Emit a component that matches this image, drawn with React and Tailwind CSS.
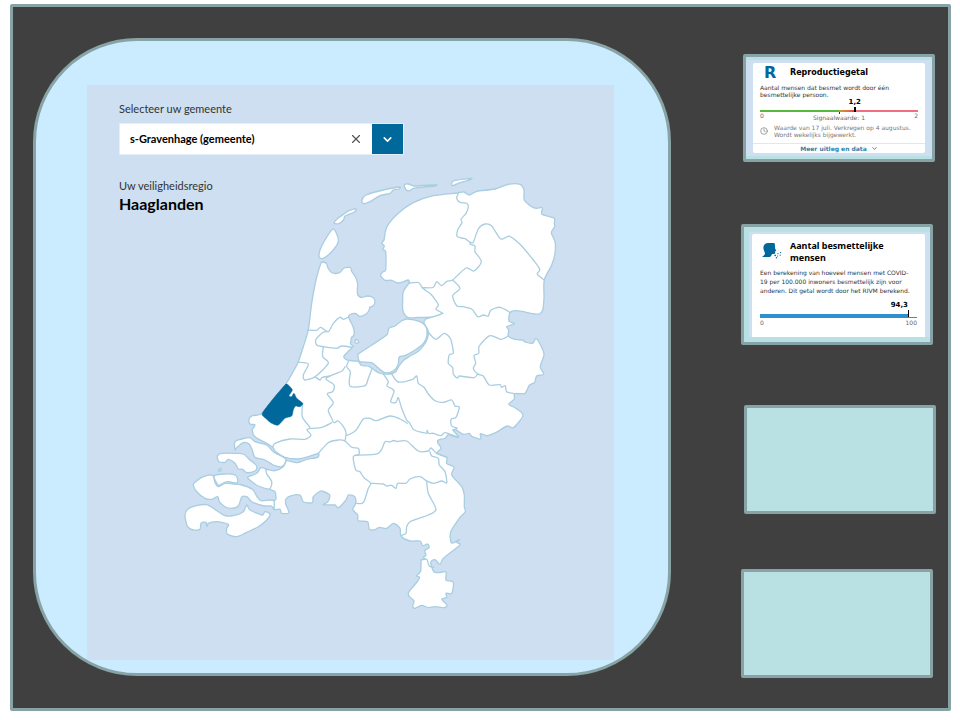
import { useState } from 'react'
import { ChevronDown, X, Clock } from 'lucide-react'

// ── Map data ─────────────────────────────────────────────────
const MAINLAND = '321,263 323,262 326.5,263.5 328,268 331.5,272.5 336,273.5 340.5,272 344,268 350.5,267.5 351.5,271 355.5,277 357.5,283 357.5,294 361.5,297.5 367.5,296 373,297.5 375,301.5 373,306 370,307 369,310.5 366,314 360,316.5 355.5,313.5 350,314.5 348.5,317 350.5,321.5 353.5,328 354,335 351.5,337.5 351,340.5 350.5,344 353,346.5 344,356 347,360 358,361.5 361.5,365.5 368,366 373,369 379,373 385,374 392,373.5 396,371.5 399,366 404,360 410,356 418,351.5 424,345 427.5,338 428.3,331 424,323 426,319 436,316 442.7,313.3 432,317 418,317.5 408,317.5 403,311 402.7,300 403.3,291.7 409,283 408.3,280 398.3,283 391.7,280.3 385,280.3 380.7,275.7 382.3,272.3 385.7,270 385.7,251.7 383,249 384.3,246 381.7,243 384,240 385.3,231.7 388.3,224.3 398.3,213.3 413.3,202.7 433.3,195.7 457.3,193 464,192 469.3,195 476.7,191.3 495,189 508.3,184.3 520,184.3 524,190 524.3,200 531.7,206.7 536.7,208.3 542.3,207.7 542,214.3 554,218 554.3,223.3 554.7,226.7 551.3,232.7 555,241.7 555,253.3 551.7,265 544.3,280 544,298.3 542.7,310 539.3,314 533.3,313.7 516.7,310.7 510,312.7 509,321 514.3,323.7 506.7,326.7 508.7,330 508.3,336 515,339.3 522.7,340 525,342 532.7,343.3 535.7,338.7 539.3,342.7 544,354 540.3,366.7 543.7,374.3 536.7,376 534.7,382.3 529.3,385.3 525,393.3 514.7,393.7 514.3,399 508.7,404.3 515,407.7 523,415.3 513.3,427.7 507.3,426 496.7,432 487.3,435.7 480.3,433.7 480.7,439 471.7,436.3 469.3,433.3 463.3,434.3 456.7,430.3 453,430 458.7,437 453,436 448.3,434.7 445,438.3 438.3,440 437.7,442.7 441,448.3 436.7,453.3 446.7,457.3 446.7,463.3 454,467.3 451.7,475 461.7,486.7 464.3,495 464.3,506.7 465.3,511.7 460,517.3 450.7,531.7 451,542.3 453.3,543 459.3,539.7 456.7,542.3 460.3,544.3 456.7,547.7 443.3,558.3 440,564.3 435,559.7 430.7,562.3 433.7,571.7 438.3,572.7 446,572 446,580 453.3,582.3 451.7,593.3 446,593.3 446.7,597.3 441.7,599.3 447,605 444.3,607.7 435,606.7 428.3,607.7 421.7,605.3 415,608.3 412.7,606 414,600.7 409.3,596.7 408.7,592.3 417.3,581.7 419.7,577.3 416.7,576 420.7,570.7 421.3,560 425.3,559.3 423.3,557.3 426,555 424.7,550.7 429,547.7 427.7,544 422.7,545.7 420,541 410,541 401,536 400,528.3 393.3,523.3 386.7,528.3 379.3,527.3 375,529.7 369.3,529.3 367.7,521.7 358.3,520.7 357.7,515 352.7,509.3 355.7,503.3 354.7,496.7 348.3,495 346,500 338.3,507.7 335,505 323.3,504.7 328,501.7 329.7,495 323.3,491.3 320,491.3 313.3,496.7 312.3,502.7 303.3,501.7 300,495 290,496 286,499 285.7,504 289,512.7 281.7,513.3 280,509.3 273.7,509.3 274,501 276,499.3 275,491.7 270,489 271,481.7 266.7,474 265.7,469.3 275,470.7 283.3,466.7 286.7,460.7 296.7,462.7 306.7,459.3 317.7,457.3 318.3,453.3 308.3,456.7 298.3,459 285,457.3 275,451 272.7,447.3 266.7,443.3 255,436.7 252.3,430 255,425 250,424 249,419.3 252.3,415.7 258.3,415 262.3,412.7 285.7,384.3 293,372 298.3,361.7 303.3,346.7 308.3,330 311.7,303.3 316,280'

const ISLANDS = [
  '235,441.7 241.7,439 250,437.7 255,441.7 266.7,445 273.3,451.7 285,458.3 285.7,461.7 281.7,466.7 273.3,465 265,460 255,457.3 252.3,450 249,444 243.3,442.7 236,448.3 235,450',
  '217.3,456 221.7,453.3 235,453.3 243.3,454 250,460 256.7,466 255,471 246.7,472.7 242.7,469.3 238.3,469 235,463.3 228.3,459.3 225,462.3 219,461.7',
  '218.3,470.7 221,468.3 220.7,471',
  '193.3,485 195.7,481.7 203.3,476.7 212.7,475.3 215,482.7 218.3,486.7 225,483.3 233.3,484 241.7,485 252.3,489.3 256.7,496 261,500.7 270,500 274,501 274,509.5 271.7,506 265,506 258.3,504.3 251.7,501.7 246.7,496.7 241.7,497.3 238.3,506 231.7,508.3 225,506.7 219.3,501.7 217.7,496.7 211.7,499.3 205,498.3 196.7,491.7',
  '214.3,475.7 225,474 235,475 237.7,479.3 236.7,483 228.3,481.7 223.3,483 219,485.3 216,481.7',
  '247.7,477.3 256.7,473.3 261,467.7 265.7,469.3 266.7,474 271.7,481.7 269.3,489 258.3,486 253.3,482.7',
  '185,515 187.7,509.3 195,506 206.7,504.7 218.3,511.7 225,515.7 233.3,515.7 243.3,511.7 246.7,505 250,510 262.3,515 265,511.7 270,514 266.7,520 258.3,526.7 246.7,532.3 236.7,536.7 227.3,534 226.7,528.3 228.3,524.3 216.7,521.7 208.3,523.3 206.7,526.7 206,522.3 201,523.3 200,529.3 193.3,530 187.7,526.7 186,521.7',
  '358.3,354 386.7,335 389,328.3 395,326 401.7,320.7 407.3,319 420,321.7 426,326.7 426.7,336.7 423,344 415,350 405,355.7 399.3,357 398,365 393.3,371 385,372.7 378,367.7 371.7,362.7 360,361.7 358,357',
  '355,341.7 356,339.3 359,342 356.7,343.3',
  '332.7,229 336.7,234 338.3,241.7 331.7,251.7 323.3,258.3 319.3,257.3 320,250 325,240',
  '334,223 337,219 344,214 349,210.7 356,209 354.5,212 345,216 343.5,220 339,223.5 335,223.7',
  '362,200 366,195 383.3,190 400,187 399.3,189 393.3,190 390,193.3 380,195.7 370,201.7 363.3,203.7',
  '404.3,185 408.3,184 415,186 436.7,184.7 435,186 413.3,188.3 410,190.7 406,189.7',
  '452,182.3 455,180.3 471.7,178.3 468.3,180.3 458.3,183.3 452.3,185.7',
]

const BORDERS = [
  '409,283 418.5,282.5 422.3,287.7 426,290.7 430.7,294 435,299.3 438.5,305 436,309 442.7,313.3',
  '458.3,193.3 456.7,198.3 460,202.3 466.7,203.3 468.3,206.7 466,213.3 461,219.3 462,222.7 457.7,230 457.3,236.7 465,238.7 470,242.3 473.3,242.3 478.3,229 485,224 491.7,226 500.7,239 509.3,236.3 520,244.3 533.3,260 539.7,269.3 537.3,274.3 544.3,280',
  '470,242.3 470.5,244.5 475,246 475,251.7 481.3,261.7 474,271 466,268 452.7,280 446.7,281.3 441.7,285.7 436.7,281.7 433,287.5 422.3,287.7',
  '452.7,280 460,288.3 452.7,295.7 456.7,305.7 463.3,306.7 471.7,309 477.7,316.7 483.3,315 488.3,316 490.7,310.3 500,307.3 510,312.3',
  '428.3,332.3 435.7,339.3 444.3,333.3 450.7,339.3 453.3,353.3 449.3,355 448.3,363.3 452.7,367.7 453.3,374 457.3,378 459.3,376 474,377.7 477.7,374',
  '508.3,336 500.7,339.3 490,335.7 479.3,346 478.7,353.3 474,355.7 475.7,363.3 473.3,368.3 477.7,374 483.3,376 489.3,385 500,384.7 501.7,387.3 505.3,385.7 506.7,391.7 514.7,393.7',
  '383.3,374 388.3,381.7 387,386 394,390.7 390.7,401.7 396,402.3 398.3,397.7 401.7,408.3 406.7,420 409.3,422.7 414.3,430 426.7,433.3 427,430.5 429,433.5 433.3,433.3 440.7,435.7 445,432.7 458.3,437.3',
  '391.7,374 398.3,382 412.7,379.3 416.7,376 418.3,383.3 424,387.3 428.3,394 435,400.7 443.3,402.3 451.7,400 455,406 459.3,407.3 456,417.3 451,419.3 451.7,426 457.3,428.3 453,430',
  '371.7,369.3 368.3,378.3 365,385.7 350.7,386.7 349.3,380 350.3,371.7 346.7,366.7 348.3,361.7',
  '345,366.7 342,371 330,376 326,379.3 334,385 332.7,391.7 327.3,394 333.3,402.7 328.3,410 331.7,418.3 334,422.7 338.3,421 345,429.3 346.7,435 351.7,433.3 356.7,429.3 363.3,419 370,418.3 376,420.7 390,416 400,419 407.3,423.3',
  '272.7,446.7 275,443.3 290,439 305,439.3 311,435 307.3,429.3 321.7,427.3 331.7,422.7',
  '302.7,403.3 302.3,416.7 310,427.3',
  '318.3,453.3 328.3,442.7 338.3,440 345,441 351.7,447.3 358.3,448.3 359,454.3 353.3,456.7 355.7,470 360,471.7 364,477.7 370.7,483.3 368.3,488.3 363.3,502.7 355.7,503.3',
  '346,435 345,441',
  '355,455.3 378.3,453.3 385,441.7 390,442 393.3,440.5 397,441.5 406.7,441 418.3,451 428.3,451 431,448 436.7,453.3 446.7,457.3',
  '430,451.7 431.7,456 438.3,458.3 439.3,465 445,471.7 446.7,482.7 441.7,481 433.3,483.3 426.7,481 420,476.7 410,479 406,483.3 397.7,483.3 396,488.3 391.7,485.3 386.7,486 383.3,484 370.7,483.3',
  '426.7,481 428.3,493.3 436,509.3 428.3,515 410,521.7 406.7,526.7 406,533.3 401,535.5',
  '421.3,560 426.7,559.3 429.3,566 433.7,567.3',
  '307.7,330 316.7,330.3 320.7,327.3 328.3,331.7 333.3,323.3 340,317.3 343.3,319.3 348.7,317',
  '328.3,331.7 323.3,332.3 316,339.3 316.7,345 323.3,346.7 336.7,348.3 341.7,346 352.3,347.3',
  '323.3,346.7 322.7,356.7 328.3,363.3 315,376.7 305,380 303.3,375 308.3,364 298.3,362.3',
  '315,376.7 320,380 322,377.5 330,376',
]

const HAAGLANDEN = '285.7,384.3 290,386.7 292.3,390 290,394 289,396 291.7,396.7 294,393.3 296.7,398.3 302.7,403.3 300,406.7 295.7,406 293.3,410 291.7,416 285,418.3 278.3,425 271.7,423.3 266.7,419.3 262.3,413.3'

// Softens a list of points into a curve that still passes through each of them
function curve(list, closed) {
  const pts = list.split(' ').map(p => p.split(',').map(Number))
  const n = pts.length
  const at = i => (closed ? pts[(i + n) % n] : pts[Math.max(0, Math.min(n - 1, i))])
  let d = `M${pts[0][0]} ${pts[0][1]}`
  for (let i = 0; i < (closed ? n : n - 1); i++) {
    const [a, b, c, e] = [at(i - 1), at(i), at(i + 1), at(i + 2)]
    // handles never reach further than the segment itself
    const len = Math.hypot(c[0] - b[0], c[1] - b[1])
    const k1 = Math.min(0.14, (len * 0.35) / (Math.hypot(c[0] - a[0], c[1] - a[1]) || 1))
    const k2 = Math.min(0.14, (len * 0.35) / (Math.hypot(e[0] - b[0], e[1] - b[1]) || 1))
    d += `C${b[0] + (c[0] - a[0]) * k1} ${b[1] + (c[1] - a[1]) * k1} ${c[0] - (e[0] - b[0]) * k2} ${c[1] - (e[1] - b[1]) * k2} ${c[0]} ${c[1]}`
  }
  return closed ? d + 'Z' : d
}

function NetherlandsMap() {
  return (
    <svg
      viewBox="119 171 463 444"
      className="block w-full h-auto"
      role="img"
      aria-label="Kaart van Nederland"
      fill="#fff"
      stroke="#a9cde1"
      strokeWidth="1.3"
      strokeLinejoin="round"
      strokeLinecap="round"
    >
      <path d={curve(MAINLAND, true)} />
      {ISLANDS.map(p => <path key={p} d={curve(p, true)} />)}
      {BORDERS.map(p => <path key={p} d={curve(p, false)} fill="none" />)}
      <path d={curve(HAAGLANDEN, true)} fill="#01689b" stroke="#01689b" strokeWidth="0.5" />
    </svg>
  )
}

// ── Municipality picker ──────────────────────────────────────
function RegionPanel() {
  const [gemeente, setGemeente] = useState('s-Gravenhage (gemeente)')

  return (
    <section className="bg-[#cddff0] px-8 pt-4 pb-[45px] text-[#333] font-['Lato',sans-serif]">
      <label htmlFor="gemeente" className="block text-[11px] leading-4">
        Selecteer uw gemeente
      </label>
      <div className="mt-[6px] flex h-8 w-[285px] max-w-full border border-[#e3eef8] bg-white">
        <input
          id="gemeente"
          value={gemeente}
          onChange={e => setGemeente(e.target.value)}
          className="min-w-0 flex-1 bg-transparent pl-[10px] text-[11px] font-bold text-black outline-none"
        />
        <button type="button" aria-label="Wissen" onClick={() => setGemeente('')} className="flex w-8 items-center justify-center text-[#555]">
          <X size={14} strokeWidth={2} />
        </button>
        <button type="button" aria-label="Toon gemeenten" className="flex w-[31px] items-center justify-center bg-[#01689b] text-white">
          <ChevronDown size={13} strokeWidth={3} />
        </button>
      </div>
      <div className="mt-4 grid">
        <div className="col-start-1 row-start-1 pt-[7px]">
          <p className="text-[11px] leading-4">Uw veiligheidsregio</p>
          <h1 className="text-[16px] leading-5 font-bold text-black">Haaglanden</h1>
        </div>
        <div className="col-start-1 row-start-1">
          <NetherlandsMap />
        </div>
      </div>
    </section>
  )
}

// ── Tiles ────────────────────────────────────────────────────
function CoughIcon() {
  return (
    <svg viewBox="0 0 20 17" className="h-[17px] w-5 shrink-0" fill="#01689b">
      <path d="M1.4 6 C1.2 3 3.2 1.2 6.4 1.1 L12.4 1.1 C12.9 2 13 3.2 13 4.4 L13.1 6.4 L14.2 8.6 L13.2 9.2 L13.2 11 C13 12 11.6 12 10 12 L9.4 13.4 L8 15 L0.4 15 C0.6 13.8 2.8 13.4 3 11.6 C2.8 9.8 1.5 8.6 1.4 6 Z" />
      <circle cx="13.2" cy="13.4" r="0.8" />
      <circle cx="16" cy="11.6" r="0.7" />
      <circle cx="15.6" cy="14" r="0.6" />
      <circle cx="18.6" cy="10.6" r="0.7" />
      <circle cx="18.2" cy="13.2" r="0.6" />
      <circle cx="14.4" cy="15.8" r="0.7" />
    </svg>
  )
}

function ReproductionTile() {
  return (
    <article className="ml-[2px] h-[108px] w-48 rounded-[2px] border-[3px] border-[#88a3a5] bg-[#b9e0e2] py-[3px] font-['DejaVu_Sans',sans-serif]">
      <div className="flex h-full flex-col bg-[#cddff0] px-[7px] py-[3px]">
        <div className="flex flex-1 flex-col rounded-[2px] bg-white pt-[2px]">
          <div className="px-[7px]">
            <header className="flex h-4 items-center">
              <span className="w-[30px] pl-1 text-[16px] leading-4 font-bold text-[#01689b]">R</span>
              <h2 className="text-[8px] leading-3 font-bold text-black">Reproductiegetal</h2>
            </header>
            <p className="pt-[3px] text-[6px] leading-[7px] whitespace-nowrap text-[#333]">
              Aantal mensen dat besmet wordt door één<br />besmettelijke persoon.
            </p>
            <div className="relative mt-3 flex h-[2px] w-[158px] max-w-full">
              <span className="w-1/2 bg-[#54b93d]" />
              <span className="w-[10%] bg-linear-to-r from-[#d09a22] to-[#f0304a]" />
              <span className="flex-1 bg-[#f26f80]" />
              <span className="absolute bottom-full left-[60%] -translate-x-1/2 pb-1 text-[7px] leading-[7px] font-bold text-black">1,2</span>
              <span className="absolute -top-[3px] left-[60%] h-[5px] w-[2px] -translate-x-1/2 bg-black" />
              <span className="absolute top-[2px] left-1/2 h-[2px] w-px bg-[#333]" />
            </div>
            <div className="flex w-[158px] max-w-full justify-between text-[6px] leading-[8px] text-[#666]">
              <span>0</span>
              <span className="pt-[2px]">Signaalwaarde: 1</span>
              <span>2</span>
            </div>
            <div className="mt-[2px] flex items-center gap-[6px] text-[6px] leading-[7px] whitespace-nowrap text-[#777]">
              <Clock size={8} strokeWidth={2} />
              <p>Waarde van 17 juli. Verkregen op 4 augustus.<br />Wordt wekelijks bijgewerkt.</p>
            </div>
          </div>
          <a href="#uitleg" className="mt-auto flex h-[10px] items-center justify-center gap-1 border-t border-[#e6e6e6] text-[6px] leading-[8px] font-bold text-[#2f7fab]">
            Meer uitleg en data
            <ChevronDown size={7} strokeWidth={3} />
          </a>
        </div>
      </div>
    </article>
  )
}

function InfectiousTile() {
  return (
    <article className="mt-[62px] h-[121px] w-48 rounded-[2px] border-[3px] border-[#88a3a5] bg-[#b9e0e2] py-[5px] pl-[5px] font-['DejaVu_Sans',sans-serif]">
      <div className="h-full bg-[#cddff0] pt-[2px] pr-[5px] pl-[3px]">
        <div className="h-full rounded-t-[2px] bg-white px-2 pt-[6px]">
          <header className="flex items-start gap-2 pl-[2px]">
            <div className="pt-[2px]"><CoughIcon /></div>
            <h2 className="text-[9px] leading-3 font-bold text-black font-['Noto_Sans',sans-serif]">Aantal besmettelijke<br />mensen</h2>
          </header>
          <p className="pt-1 text-[6px] leading-[9px] whitespace-nowrap text-[#333]">
            Een berekening van hoeveel mensen met COVID-<br />
            19 per 100.000 inwoners besmettelijk zijn voor<br />
            anderen. Dit getal wordt door het RIVM berekend.
          </p>
          <div className="relative mt-[19px] flex h-[4px] w-[158px] max-w-full items-end">
            <span className="h-[4px] w-[94%] bg-[#2f8fcf]" />
            <span className="h-px flex-1 bg-[#2f8fcf]" />
            <span className="absolute right-[9px] bottom-full pb-[5px] text-[7px] leading-[8px] font-bold text-black">94,3</span>
            <span className="absolute -top-1 left-[94%] h-[7px] w-px bg-black" />
          </div>
          <div className="flex justify-between pt-[1px] text-[6px] leading-[8px] text-[#666]">
            <span>0</span>
            <span>100</span>
          </div>
        </div>
      </div>
    </article>
  )
}

// ── Page ─────────────────────────────────────────────────────
export default function App() {
  return (
    <div className="flex min-h-screen bg-white pt-1 pr-[9px] pb-[10px] pl-[10px] font-['Noto_Sans',sans-serif]">
      <main className="flex flex-1 items-start rounded-[2px] border-[3px] border-[#88a3a5] bg-[#404040] pt-[31px] pr-3 pb-[30px] pl-5">
        <div className="min-w-0 flex-1 overflow-hidden rounded-[104px] border-[3px] border-[#88a3a5] bg-[#cbecff] pt-11 pr-[54px] pb-[13px] pl-[51px]">
          <RegionPanel />
        </div>
        <aside className="ml-[70px] w-[195px] shrink-0 pt-4">
          <ReproductionTile />
          <InfectiousTile />
          <div className="mt-15 ml-[3px] h-[109px] w-48 rounded-[2px] border-[3px] border-[#88a3a5] bg-[#b9e0e2]" />
          <div className="mt-[55px] h-[109px] w-48 rounded-[2px] border-[3px] border-[#88a3a5] bg-[#b9e0e2]" />
        </aside>
      </main>
    </div>
  )
}
